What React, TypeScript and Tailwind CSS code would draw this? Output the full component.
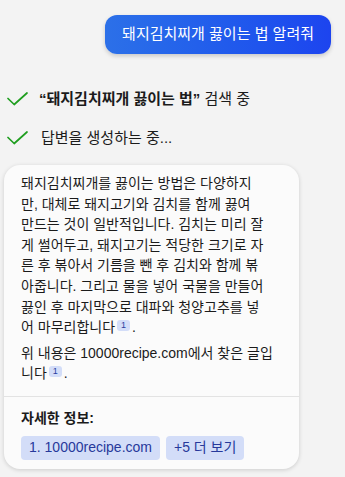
function Check() {
  return (
    <svg width="21" height="14" viewBox="0 0 21 14" fill="none" className="shrink-0">
      <path d="M1 6.5L7.2 12.5L20 1" stroke="#1f9e1f" strokeWidth="1.7" strokeLinecap="round" strokeLinejoin="round" />
    </svg>
  );
}

function Cite() {
  return (
    <span className="inline-flex items-center justify-center h-[11px] w-[13px] ml-[2px] mr-[2px] rounded-[3px] bg-[#d3ddf8] text-[9px] leading-none text-[#2c3f9f] align-[4px]">
      1
    </span>
  );
}

export default function App() {
  return (
    <div className="min-h-screen w-[345px] bg-[#f3f3f3] font-['Liberation_Sans','Noto_Sans_CJK_KR',sans-serif] text-[14px] text-[#1b1b1b]">
      <div className="flex justify-end pt-[15px] pr-[14px]">
        <div className="h-[39px] px-[17px] flex items-center rounded-[12px] bg-linear-to-r from-[#2c70e8] to-[#1d44ef] text-[15px] text-white shadow-[0_2px_4px_rgba(0,0,0,0.18)]">
          돼지김치찌개 끓이는 법 알려줘
        </div>
      </div>

      <div className="mt-[35px] pl-[7px] flex flex-col gap-[19px] text-[15px]">
        <div className="flex items-center gap-[11px] h-[20px]">
          <Check />
          <span>
            <span className="font-semibold">“돼지김치찌개 끓이는 법”</span> 검색 중
          </span>
        </div>
        <div className="flex items-center gap-[13px] h-[20px]">
          <Check />
          <span>답변을 생성하는 중...</span>
        </div>
      </div>

      <div className="mt-[17px] ml-[4px] w-[295px] rounded-[16px] bg-[#fbfbfb] shadow-[0_1px_4px_rgba(0,0,0,0.16)]">
        <div className="px-[17px] pt-[8px] pb-[12px] leading-[20.6px] whitespace-nowrap">
          <p>
            돼지김치찌개를 끓이는 방법은 다양하지<br />
            만, 대체로 돼지고기와 김치를 함께 끓여<br />
            만드는 것이 일반적입니다. 김치는 미리 잘<br />
            게 썰어두고, 돼지고기는 적당한 크기로 자<br />
            른 후 볶아서 기름을 뺀 후 김치와 함께 볶<br />
            아줍니다. 그리고 물을 넣어 국물을 만들어<br />
            끓인 후 마지막으로 대파와 청양고추를 넣<br />
            어 마무리합니다<Cite />.
          </p>
          <p className="mt-[5px]">
            위 내용은 10000recipe.com에서 찾은 글입<br />
            니다<Cite />.
          </p>
        </div>
        <div className="border-t border-[#e3e3e3] px-[17px] pt-[11px] pb-[9px]">
          <div className="font-semibold leading-[20px]">자세한 정보:</div>
          <div className="mt-[8px] flex gap-[6px]">
            <span className="h-[24px] px-[8px] flex items-center rounded-[4px] bg-[#d3ddf8] text-[#27399b] font-medium">
              1. 10000recipe.com
            </span>
            <span className="h-[24px] px-[8px] flex items-center rounded-[4px] bg-[#d3ddf8] text-[#27399b]">
              +5 더 보기
            </span>
          </div>
        </div>
      </div>
    </div>
  );
}
